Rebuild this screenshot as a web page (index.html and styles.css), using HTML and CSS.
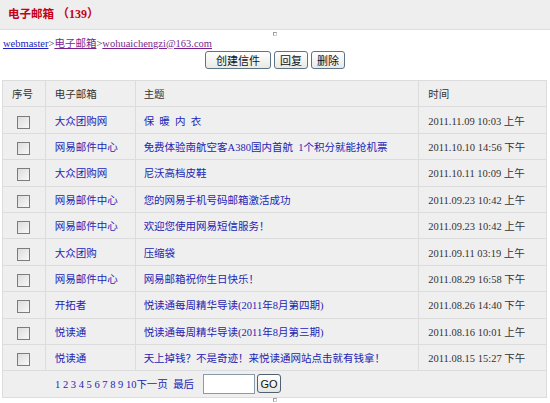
FILE: index.html
```html
<!DOCTYPE html>
<html lang="zh-CN">
<head>
<meta charset="utf-8">
<title>电子邮箱</title>
<link rel="stylesheet" href="styles.css">
</head>
<body>
<div class="topbar"><span class="title">电子邮箱</span> <span class="count">（139）</span></div>
<div class="mark-row"><span class="mark"></span></div>
<div class="crumbs"><a class="link" href="#">webmaster</a>&gt;<a class="visited" href="#">电子邮箱</a>&gt;<a class="visited" href="#">wohuaichengzi@163.com</a></div>
<div class="actions">
  <button class="btn wide">创建信件</button><button class="btn">回复</button><button class="btn">删除</button>
</div>
<table class="mail">
  <colgroup><col class="c1"><col class="c2"><col class="c3"><col class="c4"></colgroup>
  <tr class="head"><td>序号</td><td>电子邮箱</td><td>主题</td><td>时间</td></tr>
  <tr><td class="chk"><input type="checkbox"></td><td><a href="#">大众团购网</a></td><td><a href="#">保&ensp;暖&ensp;内&ensp;衣</a></td><td class="time">2011.11.09 10:03 上午</td></tr>
  <tr><td class="chk"><input type="checkbox"></td><td><a href="#">网易邮件中心</a></td><td><a href="#">免费体验南航空客A380国内首航&ensp;1个积分就能抢机票</a></td><td class="time">2011.10.10 14:56 下午</td></tr>
  <tr><td class="chk"><input type="checkbox"></td><td><a href="#">大众团购网</a></td><td><a href="#">尼沃高档皮鞋</a></td><td class="time">2011.10.11 10:09 上午</td></tr>
  <tr><td class="chk"><input type="checkbox"></td><td><a href="#">网易邮件中心</a></td><td><a href="#">您的网易手机号码邮箱激活成功</a></td><td class="time">2011.09.23 10:42 上午</td></tr>
  <tr><td class="chk"><input type="checkbox"></td><td><a href="#">网易邮件中心</a></td><td><a href="#">欢迎您使用网易短信服务！</a></td><td class="time">2011.09.23 10:42 上午</td></tr>
  <tr><td class="chk"><input type="checkbox"></td><td><a href="#">大众团购</a></td><td><a href="#">压缩袋</a></td><td class="time">2011.09.11 03:19 上午</td></tr>
  <tr><td class="chk"><input type="checkbox"></td><td><a href="#">网易邮件中心</a></td><td><a href="#">网易邮箱祝你生日快乐！</a></td><td class="time">2011.08.29 16:58 下午</td></tr>
  <tr><td class="chk"><input type="checkbox"></td><td><a href="#">开拓者</a></td><td><a href="#">悦读通每周精华导读(2011年8月第四期)</a></td><td class="time">2011.08.26 14:40 下午</td></tr>
  <tr><td class="chk"><input type="checkbox"></td><td><a href="#">悦读通</a></td><td><a href="#">悦读通每周精华导读(2011年8月第三期)</a></td><td class="time">2011.08.16 10:01 上午</td></tr>
  <tr><td class="chk"><input type="checkbox"></td><td><a href="#">悦读通</a></td><td><a href="#">天上掉钱？不是奇迹！来悦读通网站点击就有钱拿！</a></td><td class="time">2011.08.15 15:27 下午</td></tr>
  <tr class="foot"><td colspan="4"><div class="pager"><span class="pages"><a href="#">1</a> <a href="#">2</a> <a href="#">3</a> <a href="#">4</a> <a href="#">5</a> <a href="#">6</a> <a href="#">7</a> <a href="#">8</a> <a href="#">9</a> <a href="#">10</a><a href="#">下一页</a>&nbsp;&nbsp;<a href="#">最后</a></span><input class="goto" type="text"><button class="go">GO</button></div></td></tr>
</table>
<div class="mark-row bottom"><span class="mark"></span></div>
</body>
</html>
```
FILE: styles.css
```css
html, body {
  margin: 0;
  padding: 0;
  background: #ffffff;
}
body {
  font-family: "Liberation Serif", "Noto Sans CJK SC", serif;
  font-size: 10.5px;
  color: #333333;
  width: 550px;
}
.topbar {
  height: 30px;
  background: #eeeeee;
  border-bottom: 1px solid #dddddd;
  box-sizing: border-box;
  padding: 5px 0 0 8px;
  color: #c40018;
  font-weight: bold;
  line-height: 16px;
  font-size: 12px;
}
.topbar .title {
  font-family: "Noto Sans CJK SC", sans-serif;
  font-size: 11.5px;
}
.topbar .count {
  font-family: "Liberation Serif", "Noto Sans CJK SC", serif;
  font-size: 12px;
}
.mark-row {
  height: 6px;
  display: flex;
  justify-content: flex-end;
  padding-right: 273px;
  box-sizing: border-box;
  padding-top: 2px;
}
.mark {
  width: 4px;
  height: 4px;
  border-top: 1px solid #9a9a9a;
  border-left: 1px solid #9a9a9a;
  border-right: 1px solid #d0d0d0;
  border-bottom: 1px solid #d0d0d0;
  box-sizing: border-box;
}
.crumbs {
  padding-left: 3px;
  line-height: 14px;
  height: 14px;
  margin-top: 1px;
  color: #333;
}
.crumbs a {
  text-decoration: underline;
}
.crumbs .link {
  color: #2222bb;
}
.crumbs .visited {
  color: #7a1f8f;
}
.actions {
  display: flex;
  justify-content: center;
  gap: 3px;
  padding-left: 0;
  height: 29px;
  align-items: flex-start;
}
.btn {
  height: 18px;
  padding: 0 5px;
  font-family: "Noto Sans CJK SC", sans-serif;
  font-size: 11px;
  line-height: 14px;
  color: #111;
  border: 1px solid #5d7388;
  border-radius: 3px;
  background: linear-gradient(#ffffff, #e9e9e4);
  margin: 0;
}
.btn.wide {
  width: 66px;
}
table.mail {
  margin-left: 2px;
  width: 545px;
  border-collapse: collapse;
  background: #efefef;
  border: 1px solid #dedede;
}
col.c1 { width: 43px; }
col.c2 { width: 90px; }
col.c3 { width: 284px; }
col.c4 { width: 128px; }
table.mail td {
  border: 1px solid #dcdcdc;
  height: 26.4px;
  padding: 0 0 0 9px;
  font-size: 10.5px;
  vertical-align: middle;
  white-space: nowrap;
  box-sizing: border-box;
}
table.mail tr.head td {
  color: #333;
  font-family: "Noto Sans CJK SC", sans-serif;
}
table.mail td.chk {
  padding: 0;
  text-align: center;
}
table.mail td:nth-child(3) {
  padding-left: 8px;
}
table.mail a {
  color: #2424b4;
  text-decoration: none;
}
td.time {
  color: #333;
}
input[type="checkbox"] {
  appearance: none;
  -webkit-appearance: none;
  width: 13px;
  height: 13px;
  margin: 4px 0 0 0;
  border: 1px solid #7c7c7c;
  background: linear-gradient(135deg, #dcdcdc, #f8f8f8);
  box-sizing: border-box;
  vertical-align: top;
}
tr.foot td {
  padding-left: 52px !important;
}
.pager {
  display: flex;
  align-items: center;
}
.pages a {
  color: #2424b4;
}
.goto {
  margin: 0 0 0 9px;
  width: 52px;
  height: 20px;
  border: 1px solid #8b9aa8;
  background: #fff;
  box-sizing: border-box;
  padding: 0;
}
.go {
  margin: 0 0 0 2px;
  width: 24px;
  height: 19px;
  padding: 0;
  font-family: "Liberation Sans", sans-serif;
  font-size: 11px;
  color: #111;
  border: 1px solid #4f6172;
  border-radius: 3px;
  background: linear-gradient(#ffffff, #e6e6e0);
}
.mark-row.bottom {
  padding-top: 0;
}
```
